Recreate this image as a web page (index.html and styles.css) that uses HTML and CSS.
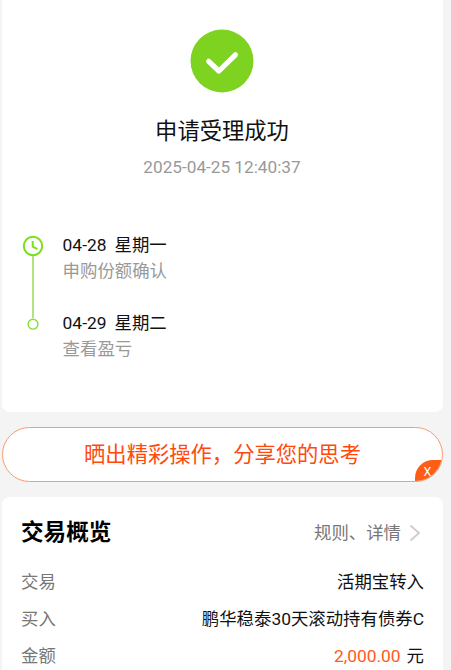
FILE: index.html
```
<!DOCTYPE html>
<html lang="zh-CN">
  <head>
    <meta charset="UTF-8" />
    <meta name="viewport" content="width=device-width, initial-scale=1.0" />
    <title>申请受理成功</title>
    <link rel="stylesheet" href="styles.css">
  </head>
  <body>
    <section class="card result">
      <svg class="result-icon" width="64" height="64" viewBox="0 0 64 64">
        <circle cx="32" cy="32" r="31.5" fill="#7ed321" />
        <path d="M18.7 32.3L28.9 42L45.4 25.8" fill="none" stroke="#fff" stroke-width="5.2" stroke-linecap="round" stroke-linejoin="round" />
      </svg>
      <h1>申请受理成功</h1>
      <p class="time">2025-04-25 12:40:37</p>

      <div class="timeline">
        <svg class="track" width="22" height="98" viewBox="0 0 22 98">
          <path d="M11 20.5V83" stroke="#a5e065" stroke-width="1.7" />
          <circle cx="11" cy="11" r="9.2" fill="#fff" stroke="#7ae01a" stroke-width="2" />
          <path d="M10.7 6V11.6L15.4 14.2" fill="none" stroke="#7ae01a" stroke-width="2" />
          <circle cx="11" cy="89.2" r="4.9" fill="#fff" stroke="#85de30" stroke-width="1.4" />
        </svg>
        <ul class="steps">
          <li>
            <p class="date"><span>04-28</span><span>星期一</span></p>
            <p class="desc">申购份额确认</p>
          </li>
          <li>
            <p class="date"><span>04-29</span><span>星期二</span></p>
            <p class="desc">查看盈亏</p>
          </li>
        </ul>
      </div>
    </section>

    <div class="share">
      <span>晒出精彩操作，分享您的思考</span>
      <button class="share-close">X</button>
    </div>

    <section class="card overview">
      <div class="overview-head">
        <h2>交易概览</h2>
        <a class="more">
          规则、详情
          <svg width="12" height="18" viewBox="0 0 12 18">
            <path d="M1.5 1.5L10 9L1.5 16.5" fill="none" stroke="#ccc" stroke-width="1.8" />
          </svg>
        </a>
      </div>
      <dl>
        <div class="row">
          <dt>交易</dt>
          <dd>活期宝转入</dd>
        </div>
        <div class="row">
          <dt>买入</dt>
          <dd>鹏华稳泰30天滚动持有债券C</dd>
        </div>
        <div class="row">
          <dt>金额</dt>
          <dd><span class="amount">2,000.00</span>元</dd>
        </div>
      </dl>
    </section>
  </body>
</html>
```
FILE: styles.css
```
* {
  box-sizing: border-box;
  margin: 0;
  padding: 0;
}

body {
  height: 670px;
  overflow: hidden;
  padding: 0 8px 0 2px;
  background: #f4f4f4;
  color: #111;
  font-family: Roboto, "Noto Sans CJK SC", sans-serif;
  font-size: 17.4px;
  line-height: 26px;
}

.card {
  background: #fff;
  border-radius: 8px;
}

.result {
  display: flex;
  flex-direction: column;
  align-items: center;
  height: 412px;
  padding: 29px 1px 0 0;
  border-radius: 0 0 8px 8px;
}

.result-icon {
  display: block;
}

h1 {
  margin-top: 22px;
  font-size: 22.3px;
  font-weight: 400;
  line-height: 32px;
}

.time {
  margin-top: 7px;
  color: #999;
  font-size: 17.2px;
}

.timeline {
  display: flex;
  align-self: stretch;
  gap: 19px;
  margin-top: 52px;
  padding-left: 19.6px;
}

.track {
  margin-top: 3px;
}

.steps {
  display: flex;
  flex-direction: column;
  gap: 26px;
  list-style: none;
}

.date {
  display: flex;
  gap: 8px;
}

.desc {
  color: #999;
}

.share {
  position: relative;
  display: flex;
  align-items: center;
  justify-content: center;
  height: 55px;
  margin: 15px 0;
  overflow: hidden;
  background: #fff;
  border: 1px solid #fb9a70;
  border-radius: 28px;
  color: #ff4a0c;
  font-size: 21.3px;
}

.share-close {
  position: absolute;
  right: -1px;
  bottom: -1px;
  width: 28px;
  height: 22px;
  padding-right: 3px;
  border: 0;
  border-radius: 18px 0 0 0;
  background: #fd5d14;
  color: #fff;
  font-family: inherit;
  font-size: 12.5px;
}

.overview {
  height: 190px;
  padding: 18px 19px 0;
}

.overview-head {
  display: flex;
  align-items: center;
  justify-content: space-between;
  height: 36px;
}

h2 {
  color: #000;
  font-size: 22.6px;
  font-weight: 700;
}

.more {
  display: flex;
  align-items: center;
  gap: 8px;
  padding-right: 3px;
  color: #777;
}

dl {
  margin-top: 12px;
}

.row {
  display: flex;
  align-items: center;
  justify-content: space-between;
  height: 37px;
}

dt {
  color: #777;
}

.amount {
  margin-right: 6px;
  color: #ff5a1e;
}
```
